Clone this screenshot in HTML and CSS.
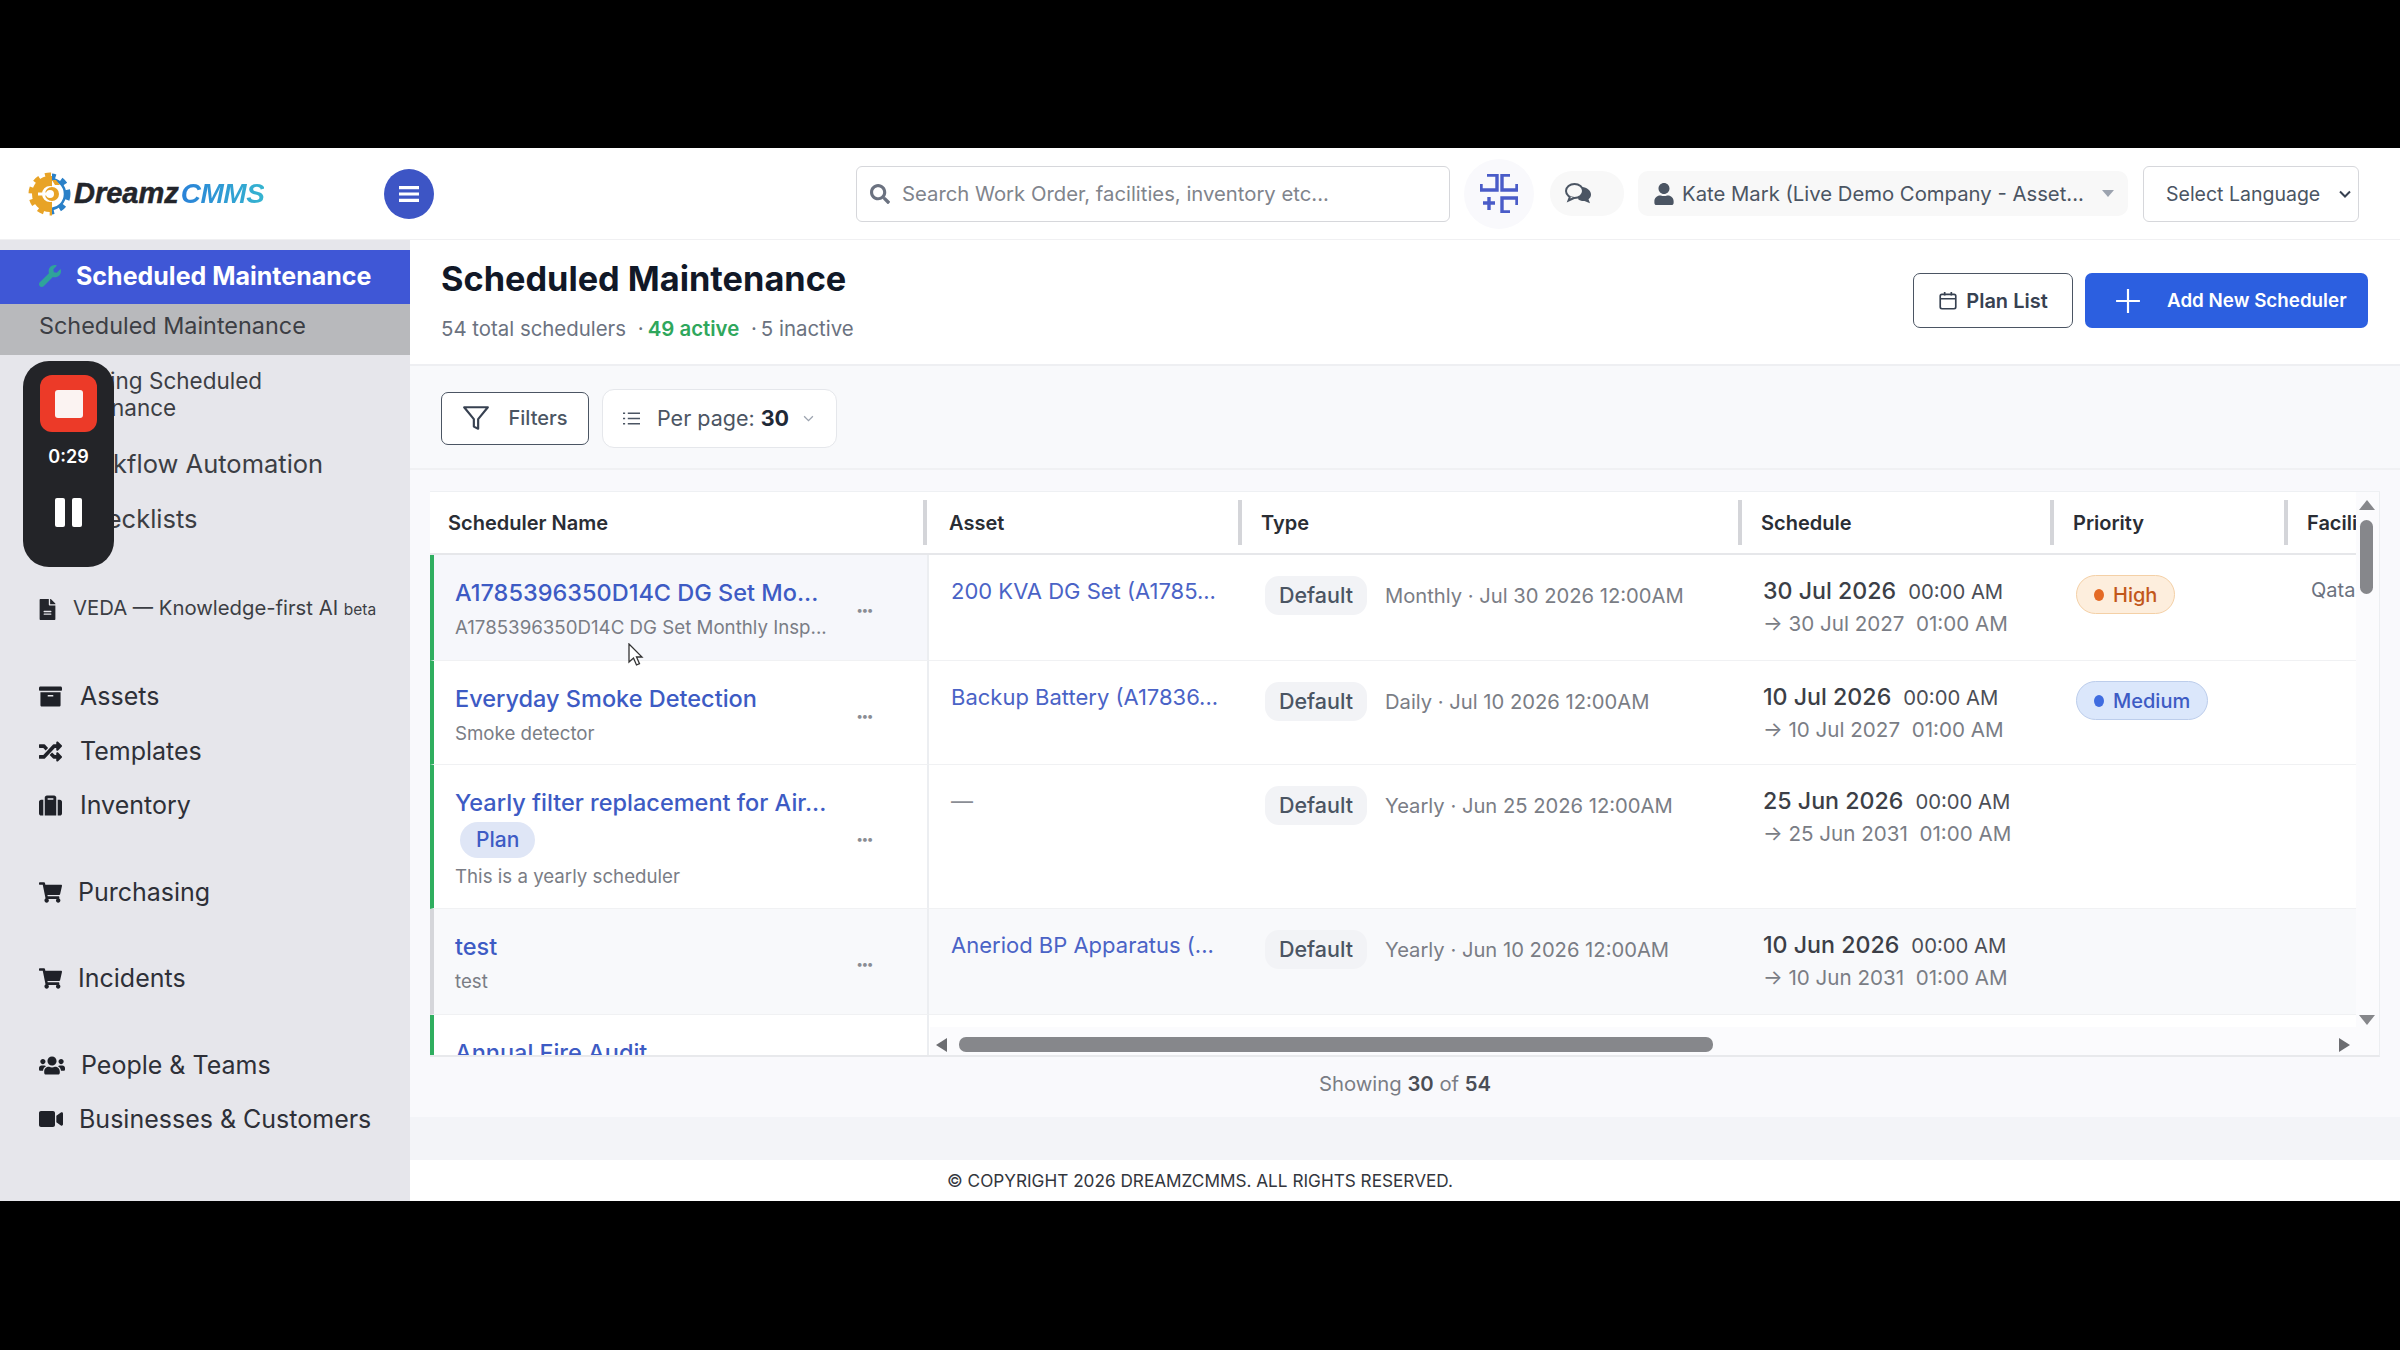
FILE: index.html
```html
<!DOCTYPE html>
<html lang="en">
<head>
  <meta charset="UTF-8">
  <title>Scheduled Maintenance</title>
  <link rel="stylesheet" href="styles.css">
</head>
<body>
  <div class="app">
    <header class="topbar">
      <div class="logo">
        <svg class="logo-gear" viewBox="0 0 44 46" width="44" height="46">
          <defs>
            <clipPath id="gear-left"><rect x="0" y="0" width="24" height="46"/></clipPath>
            <clipPath id="gear-right"><rect x="24" y="0" width="20" height="46"/></clipPath>
          </defs>
          <g clip-path="url(#gear-left)" fill="none" stroke="#e8a326">
            <circle cx="22" cy="23" r="13" stroke-width="10"/>
            <circle cx="22" cy="23" r="19" stroke-width="5" stroke-dasharray="6 6"/>
          </g>
          <g clip-path="url(#gear-right)" fill="none" stroke="#2a80c8">
            <circle cx="22" cy="23" r="15" stroke-width="2.5"/>
            <circle cx="22" cy="23" r="18" stroke-width="5" stroke-dasharray="6 6"/>
          </g>
          <path fill="#e8a326" d="M24 9h4l4 5-5 0z"/>
          <circle cx="24" cy="23" r="7" fill="#e8a326"/>
          <circle cx="22" cy="23" r="4" fill="#fff"/>
          <path fill="#fff" d="M10 21.5h10v3H10z"/>
        </svg>
        <span class="logo-dreamz">Dreamz</span><span class="logo-cmms">CMMS</span>
      </div>
      <button class="menu-btn">
        <svg viewBox="0 0 22 18" width="22" height="18"><path fill="#fff" d="M1 1h20v3.200H1zM1 7.400h20v3.200H1zM1 13.800h20V17H1z"/></svg>
      </button>
      <div class="search">
        <svg viewBox="0 0 512 512" width="20" height="20"><path fill="#6b7280" d="M505 442.700L405.300 343c-4.500-4.500-10.600-7-17-7H372c27.600-35.300 44-79.700 44-128C416 93.100 322.900 0 208 0S0 93.100 0 208s93.100 208 208 208c48.300 0 92.700-16.400 128-44v16.300c0 6.400 2.500 12.500 7 17l99.700 99.700c9.400 9.400 24.600 9.400 33.900 0l28.300-28.300c9.400-9.400 9.400-24.600.1-34zM208 336c-70.700 0-128-57.200-128-128 0-70.700 57.200-128 128-128 70.700 0 128 57.200 128 128 0 70.700-57.200 128-128 128z"/></svg>
        <span>Search Work Order, facilities, inventory etc...</span>
      </div>
      <div class="scan-btn">
        <svg viewBox="-1 -1 38 39" width="38" height="39" fill="none" stroke="#4a5cc8" stroke-width="3.4">
          <path d="M0 9v6h16V0H6"/>
          <path d="M29 0h-8v15h15V9"/>
          <path d="M2 28h12M8 22v13"/>
          <path d="M36 30v-7H21v14h8"/>
        </svg>
      </div>
      <div class="chat-btn">
        <svg viewBox="0 0 26 21" width="26" height="21">
          <path fill="#4b5563" d="M17 4c5 .5 9 3.500 9 7.500 0 2-1 3.500-2.500 4.700l1.500 4-5.500-2.200c-2.500.2-5-.5-6.500-2z"/>
          <ellipse cx="9.5" cy="8" rx="8.500" ry="7" fill="#f8f8f8" stroke="#4b5563" stroke-width="2"/>
          <path fill="#f8f8f8" stroke="#4b5563" stroke-width="2" d="M5 13.500l-1.500 4 5.500-2.500"/>
        </svg>
      </div>
      <div class="user-btn">
        <svg viewBox="0 0 448 512" width="20" height="22"><path fill="#4b5563" d="M224 256c70.700 0 128-57.300 128-128S294.700 0 224 0 96 57.300 96 128s57.300 128 128 128zm89.600 32h-16.700c-22.200 10.200-46.900 16-72.900 16s-50.600-5.800-72.900-16h-16.700C60.200 288 0 348.200 0 422.400V464c0 26.500 21.500 48 48 48h352c26.500 0 48-21.500 48-48v-41.600c0-74.200-60.200-134.400-134.400-134.400z"/></svg>
        <span>Kate Mark (Live Demo Company - Asset...</span>
        <i class="caret"></i>
      </div>
      <div class="lang">
        <span>Select Language</span>
        <svg viewBox="0 0 12 8" width="12" height="8" fill="none" stroke="#374151" stroke-width="2"><path d="M1 1.500l5 5 5-5"/></svg>
      </div>
    </header>

    <div class="body">
      <aside class="sidebar">
        <div class="nav-active">
          <svg viewBox="0 0 512 512" width="22" height="22"><path fill="#2fa39a" d="M507.700 109.100c-2.200-9-13.500-12.100-20.100-5.500l-74.400 74.400-67.900-11.300-11.300-67.900 74.400-74.400c6.600-6.600 3.400-17.900-5.700-20.200-47.400-11.700-99.600.9-136.600 37.900-39.600 39.600-50.600 97.100-34.100 147.200L18.700 402.800c-25 25-25 65.500 0 90.500 25 25 65.500 25 90.500 0l213.200-213.200c50.100 16.700 107.500 5.700 147.400-34.200 37.100-37.100 49.700-89.300 37.900-136.800z"/></svg>
          <span>Scheduled Maintenance</span>
        </div>
        <div class="nav-sub">Scheduled Maintenance</div>
        <div class="nav-text nav-two">Recurring Scheduled<br>Maintenance</div>
        <div class="nav-text nav-flow">Workflow Automation</div>
        <div class="nav-text nav-check">Checklists</div>
        <div class="nav-item nav-veda">
          <svg viewBox="0 0 384 512" width="17" height="21"><path fill="#23252b" d="M224 136V0H24C10.700 0 0 10.700 0 24v464c0 13.300 10.700 24 24 24h336c13.300 0 24-10.700 24-24V160H248c-13.200 0-24-10.800-24-24zm64 236c0 6.600-5.400 12-12 12H108c-6.600 0-12-5.400-12-12v-8c0-6.600 5.400-12 12-12h168c6.600 0 12 5.400 12 12v8zm0-64c0 6.600-5.400 12-12 12H108c-6.600 0-12-5.400-12-12v-8c0-6.600 5.400-12 12-12h168c6.600 0 12 5.400 12 12v8zM384 121.900v6.100H256V0h6.100c6.400 0 12.500 2.500 17 7l97.900 98c4.500 4.500 7 10.600 7 16.900z"/></svg>
          <span>VEDA — Knowledge-first AI <small>beta</small></span>
        </div>
        <div class="nav-item nav-assets">
          <svg viewBox="0 0 512 512" width="23" height="23"><path fill="#1f2128" d="M32 448c0 17.700 14.300 32 32 32h384c17.700 0 32-14.300 32-32V160H32v288zm160-212c0-6.600 5.400-12 12-12h104c6.600 0 12 5.400 12 12v8c0 6.600-5.400 12-12 12H204c-6.600 0-12-5.400-12-12v-8zM480 32H32C14.300 32 0 46.300 0 64v48c0 8.800 7.200 16 16 16h480c8.800 0 16-7.200 16-16V64c0-17.700-14.300-32-32-32z"/></svg>
          <span>Assets</span>
        </div>
        <div class="nav-item nav-tmpl">
          <svg viewBox="0 0 512 512" width="23" height="23"><path fill="#1f2128" d="M504.970 359.030c9.370 9.370 9.370 24.570 0 33.940l-80 79.980c-15.010 15.010-40.970 4.490-40.970-16.970V416h-58.790a24 24 0 0 1-17.460-7.540l-70.410-75.440 53.330-57.140L352 336h32v-39.980c0-21.450 25.960-31.980 40.970-16.970l80 79.980zM12 176h84l52.780 56.550 53.330-57.140-70.410-75.440A24 24 0 0 0 114.240 92H12c-6.630 0-12 5.370-12 12v60c0 6.630 5.370 12 12 12zm372 0v39.960c0 21.460 25.960 31.980 40.970 16.970l80-79.980c9.370-9.370 9.370-24.570 0-33.940l-80-79.980C409.960 24.020 384 34.550 384 56v40h-58.790a24 24 0 0 0-17.460 7.540L96 336H12c-6.630 0-12 5.370-12 12v60c0 6.630 5.370 12 12 12h102.240a24 24 0 0 0 17.460-7.540L352 176h32z"/></svg>
          <span>Templates</span>
        </div>
        <div class="nav-item nav-inv">
          <svg viewBox="0 0 512 512" width="23" height="23"><path fill="#1f2128" d="M128 480h256V80c0-26.500-21.500-48-48-48H176c-26.500 0-48 21.500-48 48v400zM192 96h128v32H192V96zm320 80v256c0 26.500-21.500 48-48 48h-48V128h48c26.500 0 48 21.500 48 48zM96 480H48c-26.500 0-48-21.500-48-48V176c0-26.500 21.500-48 48-48h48v352z"/></svg>
          <span>Inventory</span>
        </div>
        <div class="nav-item nav-purch">
          <svg viewBox="0 0 576 512" width="23" height="21"><path fill="#1f2128" d="M528.120 301.320l47.270-208C578.800 78.300 567.390 64 552 64H159.210l-9.170-44.810C147.800 8.020 137.930 0 126.530 0H24C10.750 0 0 10.750 0 24v16c0 13.250 10.750 24 24 24h69.880l70.250 343.430C147.320 417.100 136 435.220 136 456c0 30.930 25.070 56 56 56s56-25.070 56-56c0-15.670-6.450-29.840-16.820-40h209.640C430.450 426.160 424 440.330 424 456c0 30.930 25.070 56 56 56s56-25.070 56-56c0-22.170-12.890-41.330-31.580-50.400l5.520-24.270c3.410-15.020-8-29.330-23.400-29.330H218.170l-6.550-32h293.090c11.200 0 20.910-7.750 23.410-18.680z"/></svg>
          <span>Purchasing</span>
        </div>
        <div class="nav-item nav-inc">
          <svg viewBox="0 0 576 512" width="23" height="21"><path fill="#1f2128" d="M528.120 301.320l47.270-208C578.800 78.300 567.390 64 552 64H159.210l-9.170-44.810C147.800 8.020 137.930 0 126.530 0H24C10.750 0 0 10.750 0 24v16c0 13.250 10.750 24 24 24h69.880l70.250 343.430C147.320 417.100 136 435.220 136 456c0 30.930 25.070 56 56 56s56-25.070 56-56c0-15.670-6.450-29.840-16.820-40h209.640C430.450 426.160 424 440.330 424 456c0 30.930 25.070 56 56 56s56-25.070 56-56c0-22.170-12.890-41.330-31.580-50.400l5.520-24.270c3.410-15.020-8-29.330-23.400-29.330H218.170l-6.550-32h293.090c11.200 0 20.910-7.750 23.410-18.680z"/></svg>
          <span>Incidents</span>
        </div>
        <div class="nav-item nav-people">
          <svg viewBox="0 0 640 512" width="26" height="21"><path fill="#1f2128" d="M96 224c35.300 0 64-28.700 64-64s-28.700-64-64-64-64 28.700-64 64 28.700 64 64 64zm448 0c35.300 0 64-28.700 64-64s-28.700-64-64-64-64 28.700-64 64 28.700 64 64 64zm32 32h-64c-17.600 0-33.500 7.100-45.100 18.600 40.300 22.100 68.900 62 75.100 109.400h66c17.700 0 32-14.300 32-32v-32c0-35.300-28.700-64-64-64zm-256 0c61.900 0 112-50.100 112-112S381.900 32 320 32 208 82.100 208 144s50.100 112 112 112zm76.800 32h-8.300c-20.800 10-43.900 16-68.500 16s-47.600-6-68.500-16h-8.300C179.600 288 128 339.600 128 403.200V432c0 26.500 21.500 48 48 48h288c26.500 0 48-21.500 48-48v-28.800c0-63.600-51.600-115.200-115.200-115.200zm-223.700-13.400C161.500 263.100 145.600 256 128 256H64c-35.300 0-64 28.700-64 64v32c0 17.700 14.300 32 32 32h65.900c6.300-47.400 34.900-87.300 75.200-109.400z"/></svg>
          <span>People &amp; Teams</span>
        </div>
        <div class="nav-item nav-biz">
          <svg viewBox="0 0 576 512" width="24" height="22"><path fill="#1f2128" d="M336.200 64H47.800C21.400 64 0 85.400 0 111.800v288.400C0 426.600 21.400 448 47.800 448h288.400c26.400 0 47.800-21.400 47.800-47.800V111.800c0-26.400-21.400-47.800-47.800-47.800zm189.400 37.700L416 177.300v157.400l109.600 75.500c21.200 14.600 50.400-.3 50.400-25.800V127.500c0-25.400-29.100-40.400-50.400-25.800z"/></svg>
          <span>Businesses &amp; Customers</span>
        </div>

        <div class="recorder">
          <div class="rec-stop"><i></i></div>
          <div class="rec-time">0:29</div>
          <div class="rec-pause"><i></i><i></i></div>
        </div>
      </aside>

      <main class="main">
        <section class="page-head">
          <div>
            <h1>Scheduled Maintenance</h1>
            <p class="stats">54 total schedulers <span class="dot">·</span><b>49 active</b> <span class="dot">·</span>5 inactive</p>
          </div>
          <div class="head-actions">
            <button class="btn-plan">
              <svg viewBox="0 0 18 18" width="20" height="20" fill="none" stroke="#374151" stroke-width="1.5"><rect x="2" y="3" width="14" height="13" rx="1.5"/><path d="M2 7h14M6 1v3M12 1v3"/></svg>
              Plan List
            </button>
            <button class="btn-add">
              <svg viewBox="0 0 24 24" width="26" height="26" fill="none" stroke="#fff" stroke-width="2"><path d="M12 1v22M1 12h22"/></svg>
              Add New Scheduler
            </button>
          </div>
        </section>

        <section class="toolbar">
          <button class="btn-filter">
            <svg viewBox="0 0 26 26" width="28" height="28" fill="none" stroke="#374151" stroke-width="2" stroke-linejoin="round"><path d="M2 3h22l-9 11v9l-4-2v-7z"/></svg>
            Filters
          </button>
          <div class="per-page">
            <svg viewBox="0 0 16 14" width="17" height="15" fill="none" stroke="#4b5563" stroke-width="1.4"><path d="M4.500 2H16M4.500 7H16M4.500 12H16M0 2h2M0 7h2M0 12h2"/></svg>
            <span>Per page: <b>30</b></span>
            <svg viewBox="0 0 12 8" width="11" height="7" fill="none" stroke="#9ca3af" stroke-width="1.5"><path d="M1 1.500l5 5 5-5"/></svg>
          </div>
        </section>

        <section class="content">
          <div class="table-card">
            <table class="sched-table">
              <thead>
                <tr>
                  <th class="col-name">Scheduler Name</th>
                  <th class="col-asset">Asset</th>
                  <th class="col-type">Type</th>
                  <th class="col-sched">Schedule</th>
                  <th class="col-prio">Priority</th>
                  <th class="col-fac">Facility</th>
                </tr>
              </thead>
              <tbody>
                <tr class="row-a">
                  <td class="name-cell"><div class="name-wrap"><div><a class="name">A1785396350D14C DG Set Mo...</a><div class="desc">A1785396350D14C DG Set Monthly Insp...</div></div><span class="more">•••</span></div></td>
                  <td class="asset"><a>200 KVA DG Set (A1785...</a></td>
                  <td class="type"><div class="type-wrap"><span class="pill-default">Default</span><span class="freq">Monthly · Jul 30 2026 12:00AM</span></div></td>
                  <td class="sched"><div class="sd"><b>30 Jul 2026</b><span>00:00 AM</span></div><div class="ed">→ 30 Jul 2027&nbsp; 01:00 AM</div></td>
                  <td class="prio-cell"><span class="prio high"><i></i>High</span></td>
                  <td class="fac">Qatar</td>
                </tr>
                <tr class="row-b">
                  <td class="name-cell"><div class="name-wrap"><div><a class="name">Everyday Smoke Detection</a><div class="desc">Smoke detector</div></div><span class="more">•••</span></div></td>
                  <td class="asset"><a>Backup Battery (A17836...</a></td>
                  <td class="type"><div class="type-wrap"><span class="pill-default">Default</span><span class="freq">Daily · Jul 10 2026 12:00AM</span></div></td>
                  <td class="sched"><div class="sd"><b>10 Jul 2026</b><span>00:00 AM</span></div><div class="ed">→ 10 Jul 2027&nbsp; 01:00 AM</div></td>
                  <td class="prio-cell"><span class="prio medium"><i></i>Medium</span></td>
                  <td></td>
                </tr>
                <tr class="row-c">
                  <td class="name-cell"><div class="name-wrap"><div><a class="name">Yearly filter replacement for Air...</a><div class="plan-line"><span class="pill-plan">Plan</span></div><div class="desc">This is a yearly scheduler</div></div><span class="more">•••</span></div></td>
                  <td class="asset dash">—</td>
                  <td class="type"><div class="type-wrap"><span class="pill-default">Default</span><span class="freq">Yearly · Jun 25 2026 12:00AM</span></div></td>
                  <td class="sched"><div class="sd"><b>25 Jun 2026</b><span>00:00 AM</span></div><div class="ed">→ 25 Jun 2031&nbsp; 01:00 AM</div></td>
                  <td></td>
                  <td></td>
                </tr>
                <tr class="row-d shade inactive">
                  <td class="name-cell"><div class="name-wrap"><div><a class="name">test</a><div class="desc">test</div></div><span class="more">•••</span></div></td>
                  <td class="asset"><a>Aneriod BP Apparatus (...</a></td>
                  <td class="type"><div class="type-wrap"><span class="pill-default">Default</span><span class="freq">Yearly · Jun 10 2026 12:00AM</span></div></td>
                  <td class="sched"><div class="sd"><b>10 Jun 2026</b><span>00:00 AM</span></div><div class="ed">→ 10 Jun 2031&nbsp; 01:00 AM</div></td>
                  <td></td>
                  <td></td>
                </tr>
                <tr class="row-e">
                  <td class="name-cell"><a class="name">Annual Fire Audit</a></td>
                  <td colspan="5"></td>
                </tr>
              </tbody>
            </table>

            <div class="vscroll">
              <i class="arrow-up"></i>
              <i class="vthumb"></i>
              <i class="arrow-down"></i>
            </div>
            <div class="hscroll">
              <i class="arrow-left"></i>
              <i class="hthumb"></i>
              <i class="arrow-right"></i>
            </div>
          </div>
          <div class="showing">Showing <b>30</b> of <b>54</b></div>
        </section>

        <footer class="copyright">© COPYRIGHT 2026 DREAMZCMMS. ALL RIGHTS RESERVED.</footer>
      </main>
    </div>

    <svg class="cursor" viewBox="0 0 16 24" width="16" height="24"><path fill="#fff" stroke="#333" stroke-width="1.3" d="M1 1v18l4.500-4 3 7 3-1.300-3-6.700H14z"/></svg>
  </div>
</body>
</html>
```

FILE: styles.css
```css
* {
  box-sizing: border-box;
}

html, body {
  margin: 0;
  height: 100%;
  background: #000;
}

body {
  font-family: Inter, "Liberation Sans", sans-serif;
  color: #1f2937;
  padding: 148px 0 149px;
  height: 1350px;
  overflow: hidden;
}

button {
  font-family: inherit;
}

.app {
  position: relative;
  height: 1053px;
  background: #fff;
  display: flex;
  flex-direction: column;
}

/* top bar */
.topbar {
  height: 92px;
  flex: none;
  display: flex;
  align-items: center;
  padding: 0 0 0 28px;
  background: #fff;
  border-bottom: 1px solid #f0f0f2;
}

.logo {
  width: 356px;
  display: flex;
  align-items: center;
}

.logo-gear {
  margin-right: 2px;
  flex: none;
}

.logo-dreamz {
  font: italic 700 29px "Liberation Sans", sans-serif;
  color: #23252b;
  -webkit-text-stroke: 0.5px #23252b;
}

.logo-cmms {
  font: italic 700 28px "Liberation Sans", sans-serif;
  margin-left: 2px;
  letter-spacing: -0.5px;
  background: linear-gradient(90deg, #2a82d8, #35b4d0);
  -webkit-background-clip: text;
  background-clip: text;
  color: transparent;
}

.menu-btn {
  width: 50px;
  height: 50px;
  border: none;
  border-radius: 50%;
  background: #3d55c5;
  display: flex;
  align-items: center;
  justify-content: center;
  padding: 0;
  flex: none;
}

.search {
  margin-left: 422px;
  width: 594px;
  height: 56px;
  border: 1px solid #d6d7db;
  border-radius: 6px;
  display: flex;
  align-items: center;
  gap: 12px;
  padding: 0 13px;
  font-size: 20.3px;
  color: #80848c;
  flex: none;
}

.scan-btn {
  margin-left: 14px;
  width: 70px;
  height: 70px;
  border-radius: 50%;
  background: #f9f9fc;
  display: flex;
  align-items: center;
  justify-content: center;
  flex: none;
}

.chat-btn {
  margin-left: 16px;
  width: 74px;
  height: 45px;
  border-radius: 22px;
  background: #f8f8f8;
  display: flex;
  align-items: center;
  padding-left: 15px;
  flex: none;
}

.user-btn {
  margin-left: 14px;
  width: 490px;
  height: 45px;
  border-radius: 10px;
  background: #f8f8f8;
  display: flex;
  align-items: center;
  padding: 0 16px;
  gap: 8px;
  font-size: 20.3px;
  color: #4b5563;
  white-space: nowrap;
  flex: none;
}

.user-btn svg {
  flex: none;
}

.caret {
  margin-left: 10px;
  border-left: 6px solid transparent;
  border-right: 6px solid transparent;
  border-top: 7px solid #9ca3af;
}

.lang {
  margin-left: 15px;
  width: 216px;
  height: 56px;
  border: 1px solid #d6d7db;
  border-radius: 6px;
  display: flex;
  align-items: center;
  justify-content: space-between;
  padding: 0 7px 0 22px;
  font-size: 19.5px;
  color: #4b5563;
  flex: none;
}

.body {
  flex: 1;
  display: flex;
  min-height: 0;
}

/* sidebar */
.sidebar {
  position: relative;
  width: 410px;
  flex: none;
  background: #e6e6eb;
  padding-top: 10px;
  color: #2e3038;
  font-size: 25px;
}

.nav-active {
  height: 54px;
  background: #3f57d6;
  color: #fff;
  font-size: 25px;
  font-weight: 700;
  display: flex;
  align-items: center;
  padding: 0 0 2px 39px;
  gap: 15px;
}

.nav-sub {
  height: 51px;
  background: #b8b9bc;
  display: flex;
  align-items: center;
  padding: 0 0 9px 39px;
  font-size: 23.4px;
  color: #3c3e44;
}

.nav-text {
  padding-left: 39px;
  color: #3c3e44;
}

.nav-two {
  margin-top: 12px;
  font-size: 22.5px;
  line-height: 27px;
}

.nav-flow {
  margin-top: 27px;
  padding-left: 64px;
  font-size: 25.5px;
  line-height: 32px;
}

.nav-check {
  margin-top: 23px;
  padding-left: 73px;
  font-size: 25.5px;
  line-height: 32px;
}

.nav-item {
  display: flex;
  align-items: center;
  padding-left: 39px;
  gap: 18px;
  line-height: 32px;
}

.nav-item svg {
  flex: none;
}

.nav-veda {
  margin-top: 57px;
  font-size: 20.3px;
  color: #3c3e44;
  gap: 17px;
}

.nav-veda small {
  font-size: 15.5px;
}

.nav-assets {
  margin-top: 54px;
}

.nav-tmpl {
  margin-top: 23px;
}

.nav-inv {
  margin-top: 22px;
}

.nav-purch {
  margin-top: 55px;
  gap: 16px;
}

.nav-inc {
  margin-top: 54px;
  gap: 16px;
}

.nav-people {
  margin-top: 55px;
  gap: 16px;
}

.nav-biz {
  margin-top: 22px;
  gap: 16px;
}

.recorder {
  position: absolute;
  left: 23px;
  top: 121px;
  width: 91px;
  height: 206px;
  border-radius: 26px;
  background: #232428;
  display: flex;
  flex-direction: column;
  align-items: center;
  padding-top: 14px;
}

.rec-stop {
  width: 57px;
  height: 57px;
  border-radius: 12px;
  background: #ec3a28;
  display: flex;
  align-items: center;
  justify-content: center;
  flex: none;
}

.rec-stop i {
  width: 28px;
  height: 28px;
  background: #fbf3f2;
  border-radius: 3px;
}

.rec-time {
  margin-top: 14px;
  color: #fff;
  font-size: 18px;
  font-weight: 600;
  line-height: 22px;
}

.rec-pause {
  margin-top: 30px;
  display: flex;
  gap: 7px;
}

.rec-pause i {
  width: 10px;
  height: 29px;
  border-radius: 2px;
  background: #fff;
}

/* main */
.main {
  flex: 1;
  min-width: 0;
  display: flex;
  flex-direction: column;
  background: #f8f9fb;
}

.page-head {
  height: 126px;
  flex: none;
  background: #fff;
  border-bottom: 2px solid #eeeff2;
  display: flex;
  justify-content: space-between;
  padding: 15px 32px 0 31px;
}

.page-head h1 {
  margin: 0;
  font-size: 34.3px;
  font-weight: 700;
  line-height: 48px;
  color: #111827;
}

.stats {
  margin: 13px 0 0;
  font-size: 20.4px;
  color: #6b7280;
}

.stats b {
  color: #2fa75c;
  font-weight: 600;
}

.stats .dot {
  margin: 0 4px 0 6px;
}

.head-actions {
  display: flex;
  gap: 12px;
  padding-top: 18px;
  align-items: flex-start;
}

.btn-plan {
  height: 55px;
  width: 160px;
  border: 1px solid #4b5563;
  border-radius: 7px;
  background: #fff;
  display: flex;
  align-items: center;
  justify-content: center;
  gap: 8px;
  font-size: 20px;
  font-weight: 600;
  color: #374151;
}

.btn-add {
  height: 55px;
  width: 283px;
  border: none;
  border-radius: 7px;
  background: #2c5fe0;
  display: flex;
  align-items: center;
  gap: 26px;
  padding: 0 0 0 30px;
  font-size: 18.8px;
  font-weight: 600;
  color: #fff;
  white-space: nowrap;
}

.toolbar {
  height: 104px;
  flex: none;
  border-bottom: 2px solid #f0f1f3;
  display: flex;
  align-items: center;
  gap: 13px;
  padding: 2px 0 0 31px;
}

.btn-filter {
  height: 53px;
  width: 148px;
  border: 1px solid #4b5563;
  border-radius: 7px;
  background: #fff;
  display: flex;
  align-items: center;
  justify-content: center;
  gap: 18px;
  font-size: 20px;
  font-weight: 500;
  color: #4b5563;
}

.per-page {
  height: 59px;
  width: 235px;
  border: 1px solid #e5e7eb;
  border-radius: 12px;
  background: #fff;
  display: flex;
  align-items: center;
  padding: 0 0 0 20px;
  gap: 17px;
  font-size: 21.5px;
  color: #4b5563;
}

.per-page svg {
  flex: none;
}

.per-page svg:last-child {
  margin-left: -3px;
}

.per-page b {
  color: #1f2937;
}

.per-page span {
  white-space: nowrap;
}

.content {
  flex: 1;
  padding: 22px 0 0 20px;
  display: flex;
  flex-direction: column;
  min-height: 0;
  background: linear-gradient(to bottom, #f9f9fc calc(100% - 43px), #f3f4f8 calc(100% - 43px));
}

/* table */
.table-card {
  position: relative;
  width: 1950px;
  height: 565px;
  flex: none;
  overflow: hidden;
  background: #fff;
  border-bottom: 2px solid #e8e9ec;
  border-right: 1px solid #eceef1;
  box-shadow: 0 -1px 0 #eef0f3;
}

.sched-table {
  width: 1932px;
  table-layout: fixed;
  border-collapse: separate;
  border-spacing: 0;
}

.sched-table th {
  height: 63px;
  text-align: left;
  font-size: 20px;
  font-weight: 600;
  color: #2a2d34;
  padding: 0 0 0 21px;
  border-bottom: 2px solid #e6e7ea;
  white-space: nowrap;
  position: relative;
}

.sched-table th + th::before {
  content: "";
  position: absolute;
  left: -2px;
  top: 8px;
  bottom: 8px;
  width: 4px;
  background: #d4d5d9;
}

.sched-table .col-asset::before {
  left: -6px;
}

.sched-table .col-name {
  padding-left: 18px;
}

.sched-table .col-asset {
  padding-left: 20px;
}

.col-name { width: 499px; }
.col-asset { width: 311px; }
.col-type { width: 500px; }
.col-sched { width: 312px; }
.col-prio { width: 234px; }
.col-fac { width: 76px; }

.sched-table td {
  vertical-align: top;
  padding: 21px 0 0 22px;
  border-bottom: 1px solid #f0f1f3;
  white-space: nowrap;
  overflow: hidden;
}

.shade td {
  background: #f8f9fb;
}

.row-a .name-cell {
  background: #f6f7fb;
}

.row-a { height: 106px; }
.row-b { height: 104px; }
.row-c { height: 144px; }
.row-d { height: 106px; }
.row-e { height: 60px; }

.sched-table .name-cell {
  border-left: 4px solid #2fae5f;
  border-right: 2px solid #eceef1;
  padding: 23px 0 0 21px;
}

.inactive .name-cell {
  border-left-color: #d5d6da;
}

.name-wrap {
  display: flex;
  align-items: center;
  justify-content: space-between;
  padding-right: 55px;
}

.name {
  display: block;
  font-size: 23.5px;
  line-height: 30px;
  font-weight: 500;
  color: #3d5bc4;
}

.asset {
  font-size: 22px;
  line-height: 30px;
  color: #4a63c6;
}

.sched-table .dash {
  color: #8a8d94;
}

.desc {
  margin-top: 8px;
  font-size: 18.7px;
  line-height: 24px;
  color: #7a7d85;
}

.more {
  font-size: 12px;
  letter-spacing: -1.5px;
  color: #8a8d94;
}

.plan-line {
  margin-top: 4px;
  padding-left: 5px;
  line-height: 0;
}

.pill-plan {
  display: inline-block;
  height: 36px;
  line-height: 36px;
  padding: 0 16px;
  border-radius: 18px;
  background: #dfe6f6;
  color: #3d5bc4;
  font-size: 21px;
  font-weight: 500;
}

.plan-line + .desc {
  margin-top: 7px;
}

.sched-table .type {
  padding: 21px 0 0 25px;
}

.type-wrap {
  display: flex;
  align-items: center;
  gap: 18px;
}

.pill-default {
  height: 39px;
  line-height: 39px;
  width: 102px;
  text-align: center;
  border-radius: 14px;
  background: #f2f3f6;
  color: #4b5563;
  font-size: 21.5px;
  font-weight: 500;
}

.freq {
  font-size: 20.2px;
  color: #7a7d85;
}

.sched-table .sched {
  padding-left: 23px;
}

.sd {
  display: flex;
  align-items: baseline;
  gap: 12px;
  font-size: 20.3px;
  line-height: 30px;
  color: #4b4e56;
}

.sd b {
  font-size: 23.2px;
  font-weight: 500;
  color: #3c3f47;
}

.ed {
  margin-top: 4px;
  font-size: 20.6px;
  line-height: 26px;
  color: #7a7d85;
}

.sched-table .prio-cell {
  padding: 20px 0 0 24px;
}

.prio {
  display: inline-flex;
  align-items: center;
  gap: 9px;
  height: 39px;
  padding: 0 17px;
  border-radius: 20px;
  font-size: 20px;
  font-weight: 500;
}

.prio i {
  width: 10px;
  height: 12px;
  border-radius: 50%;
}

.high {
  background: #fdeedd;
  border: 1px solid #f4d0a6;
  color: #c2571a;
}

.high i {
  background: #e46a25;
}

.medium {
  background: #dbe7fb;
  border: 1px solid #bccdeb;
  color: #3d5bc4;
}

.medium i {
  background: #3f6ce0;
}

.sched-table .fac {
  padding: 23px 0 0 25px;
  font-size: 20px;
  color: #6b7280;
}

.vscroll {
  position: absolute;
  top: 0;
  right: 0;
  bottom: 0;
  width: 23px;
  background: #fbfbfd;
}

.arrow-up {
  position: absolute;
  top: 8px;
  left: 3px;
  border-left: 8px solid transparent;
  border-right: 8px solid transparent;
  border-bottom: 10px solid #86878b;
}

.arrow-down {
  position: absolute;
  top: 523px;
  left: 3px;
  border-left: 8px solid transparent;
  border-right: 8px solid transparent;
  border-top: 10px solid #86878b;
}

.vthumb {
  position: absolute;
  top: 28px;
  left: 4px;
  width: 13px;
  height: 74px;
  border-radius: 7px;
  background: #86878b;
}

.hscroll {
  position: absolute;
  left: 500px;
  right: 23px;
  bottom: 0;
  height: 28px;
  background: #fbfbfd;
}

.arrow-left {
  position: absolute;
  left: 6px;
  top: 11px;
  border-top: 7px solid transparent;
  border-bottom: 7px solid transparent;
  border-right: 11px solid #6c6d71;
}

.arrow-right {
  position: absolute;
  right: 6px;
  top: 11px;
  border-top: 7px solid transparent;
  border-bottom: 7px solid transparent;
  border-left: 11px solid #6c6d71;
}

.hthumb {
  position: absolute;
  left: 29px;
  top: 10px;
  width: 754px;
  height: 15px;
  border-radius: 7px;
  background: #86878b;
}

.showing {
  margin-top: 15px;
  width: 1950px;
  text-align: center;
  font-size: 20.3px;
  line-height: 24px;
  color: #7a7d85;
}

.showing b {
  color: #4b4e56;
  font-weight: 600;
}

.copyright {
  height: 41px;
  flex: none;
  background: #fff;
  display: flex;
  align-items: center;
  justify-content: center;
  font-size: 17.2px;
  color: #33363d;
  padding-right: 410px;
}

.cursor {
  position: absolute;
  left: 628px;
  top: 495px;
}
```
